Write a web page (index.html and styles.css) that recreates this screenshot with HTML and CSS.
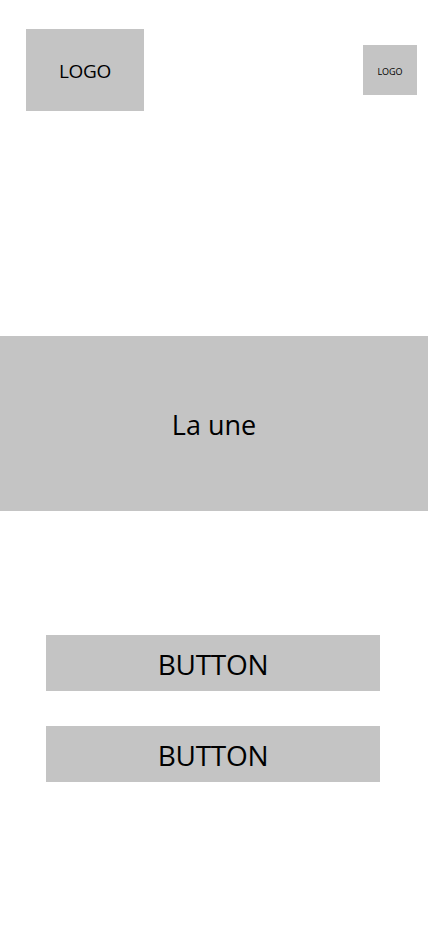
FILE: index.html
```html
<!DOCTYPE html>
<html lang="fr">
<head>
<meta charset="utf-8">
<meta name="viewport" content="width=device-width, initial-scale=1">
<title>La une</title>
<link rel="stylesheet" href="styles.css">
</head>
<body>
  <header class="header">
    <div class="logo logo-main">LOGO</div>
    <div class="logo logo-small">LOGO</div>
  </header>
  <section class="banner">La une</section>
  <div class="actions">
    <button class="btn" type="button">BUTTON</button>
    <button class="btn" type="button">BUTTON</button>
  </div>
</body>
</html>
```
FILE: styles.css
```css
* { box-sizing: border-box; }
html, body {
  margin: 0;
  padding: 0;
  background: #ffffff;
}
body {
  width: 428px;
  min-height: 926px;
  font-family: "Open Sans", "Noto Sans", sans-serif;
  color: #000;
}
.header {
  display: flex;
  justify-content: space-between;
  align-items: flex-start;
  padding: 29px 11px 0 26px;
}
.logo {
  background: #c4c4c4;
  display: flex;
  align-items: center;
  justify-content: center;
}
.logo-main {
  width: 118px;
  height: 82px;
  font-size: 19px;
  padding-top: 2px;
  letter-spacing: -0.3px;
}
.logo-small {
  width: 54px;
  height: 50px;
  margin-top: 16px;
  font-size: 9px;
  padding-top: 2px;
}
.banner {
  margin-top: 225px;
  height: 175px;
  background: #c4c4c4;
  display: flex;
  align-items: center;
  justify-content: center;
  font-size: 27px;
  padding-top: 2px;
}
.actions {
  display: flex;
  flex-direction: column;
  gap: 35px;
  padding: 124px 0 0 46px;
}
.btn {
  width: 334px;
  height: 56px;
  border: 0;
  margin: 0;
  background: #c4c4c4;
  font-family: inherit;
  font-size: 28px;
  color: #000;
  padding: 1px 0 0;
  display: flex;
  align-items: center;
  justify-content: center;
  letter-spacing: -0.3px;
}
```
